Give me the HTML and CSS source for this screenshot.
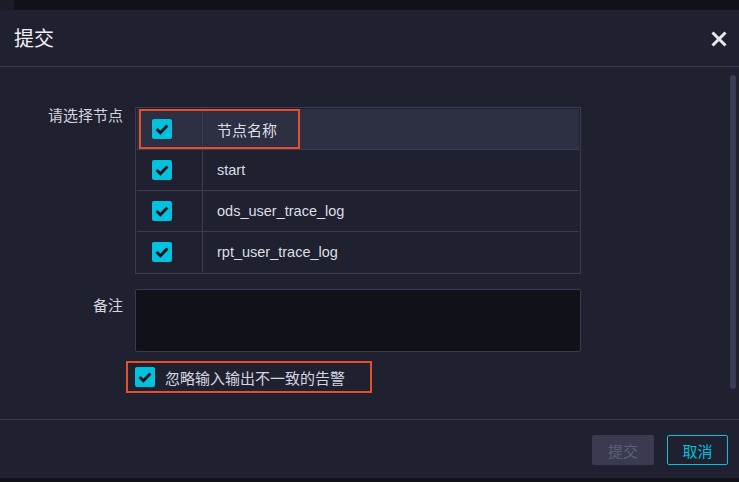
FILE: index.html
```html
<!DOCTYPE html>
<html lang="zh">
<head>
<meta charset="utf-8">
<link rel="stylesheet" href="styles.css">
</head>
<body>
<div class="topstrip"><div class="topstrip-left"></div></div>
<div class="dialog">
  <div class="header">
    <div class="title">提交</div>
    <svg class="close" width="18" height="18" viewBox="0 0 18 18"><path d="M2.5 2.5 L15.5 15.5 M15.5 2.5 L2.5 15.5" stroke="#e6e7ee" stroke-width="3" stroke-linecap="butt"/></svg>
  </div>
  <div class="body">
    <div class="content">
      <div class="row">
        <div class="label">请选择节点</div>
        <div class="table-wrap">
          <table class="tbl">
            <tr class="thead">
              <td class="c1"><span class="cb"><svg width="20" height="20" viewBox="0 0 20 20"><path d="M4.6 10 L8.4 13.8 L15.4 6.6" fill="none" stroke="#111319" stroke-width="2.9"/></svg></span></td>
              <td class="c2">节点名称</td>
            </tr>
            <tr>
              <td class="c1"><span class="cb"><svg width="20" height="20" viewBox="0 0 20 20"><path d="M4.6 10 L8.4 13.8 L15.4 6.6" fill="none" stroke="#111319" stroke-width="2.9"/></svg></span></td>
              <td class="c2">start</td>
            </tr>
            <tr>
              <td class="c1"><span class="cb"><svg width="20" height="20" viewBox="0 0 20 20"><path d="M4.6 10 L8.4 13.8 L15.4 6.6" fill="none" stroke="#111319" stroke-width="2.9"/></svg></span></td>
              <td class="c2">ods_user_trace_log</td>
            </tr>
            <tr>
              <td class="c1"><span class="cb"><svg width="20" height="20" viewBox="0 0 20 20"><path d="M4.6 10 L8.4 13.8 L15.4 6.6" fill="none" stroke="#111319" stroke-width="2.9"/></svg></span></td>
              <td class="c2">rpt_user_trace_log</td>
            </tr>
          </table>
          <div class="hl hl-head"></div>
        </div>
      </div>
      <div class="row row-note">
        <div class="label">备注</div>
        <div class="textarea"></div>
      </div>
      <div class="row row-ignore">
        <div class="label"></div>
        <div class="ignore">
          <span class="cb"><svg width="20" height="20" viewBox="0 0 20 20"><path d="M4.6 10 L8.4 13.8 L15.4 6.6" fill="none" stroke="#111319" stroke-width="2.9"/></svg></span>
          <span class="ignore-text">忽略输入输出不一致的告警</span>
          <div class="hl hl-ignore"></div>
        </div>
      </div>
    </div>
    <div class="scrollbar"></div>
  </div>
  <div class="footer">
    <button class="btn btn-disabled">提交</button>
    <button class="btn btn-cancel">取消</button>
  </div>
</div>
<div class="bottomstrip"></div>
</body>
</html>
```

FILE: styles.css
```css
* { box-sizing: border-box; }
html, body { margin: 0; padding: 0; }
body {
  width: 739px;
  height: 482px;
  overflow: hidden;
  background: #10121a;
  font-family: "Liberation Sans", "Noto Sans CJK SC", sans-serif;
  color: #d3d5de;
}
.topstrip { height: 10px; background: #10121a; }
.topstrip-left { width: 14px; height: 10px; background: #1a1c27; }
.dialog { background: #1f2130; height: 468px; display: flex; flex-direction: column; }
.header {
  height: 57px;
  border-bottom: 1px solid #383a4e;
  display: flex;
  align-items: center;
  justify-content: space-between;
  padding: 0 11px 0 14px;
}
.title { font-size: 20px; color: #f0f1f5; font-family: "Noto Sans CJK SC", sans-serif; line-height: 24px; }
.close { display: block; margin-top: 1px; }
.body { height: 352px; display: flex; position: relative; }
.content { flex: 1; padding-top: 40px; }
.scrollbar {
  position: absolute;
  right: 3px;
  top: 8px;
  width: 6px;
  height: 314px;
  border-radius: 3px;
  background: #3a3c55;
}
.row { display: flex; }
.label {
  width: 135px;
  padding-right: 12px;
  text-align: right;
  font-size: 15px;
  font-family: "Noto Sans CJK SC", sans-serif;
  color: #d3d5de;
  line-height: 18px;
}
.row:first-child .label { margin-top: -1px; }
.table-wrap {
  position: relative;
  width: 446px;
  border: 1px solid #3a3c52;
  padding: 1px;
}
.tbl { width: 100%; border-collapse: separate; border-spacing: 0; }
.tbl td { border-bottom: 1px solid #3a3c52; height: 41px; padding: 0; font-size: 14.5px; }
.tbl tr:last-child td { border-bottom: none; height: 40px; }
.thead td { background: #2d2f42; }
.c1 { width: 66px; padding-left: 15px !important; border-right: 1px solid #3a3c52; }
.c2 { padding-left: 14px !important; color: #dcdee6; }
.thead .c2 { font-family: "Noto Sans CJK SC", sans-serif; font-size: 15px; }
.cb {
  display: block;
  width: 20px;
  height: 20px;
  border-radius: 2px;
  background: #00c1de;
}
.cb svg { display: block; }
.hl { position: absolute; border: 2px solid #e5502b; pointer-events: none; }
.hl-head { left: 3px; top: 1px; width: 161px; height: 40px; }
.row-note { margin-top: 15px; }
.row-note .label { padding-top: 7px; }
.textarea {
  width: 446px;
  height: 63px;
  background: #10121a;
  border: 1px solid #383a4e;
  border-radius: 2px;
}
.row-ignore { margin-top: 15px; }
.ignore { position: relative; display: flex; align-items: center; height: 20px; }
.ignore-text { margin-left: 10px; font-size: 15px; font-family: "Noto Sans CJK SC", sans-serif; color: #d5d7e0; }
.hl-ignore { left: -9px; top: -6px; width: 246px; height: 32px; }
.footer {
  flex: 1;
  border-top: 1px solid #383a4e;
  display: flex;
  justify-content: flex-end;
  align-items: flex-start;
  padding: 15px 11px 0 0;
  gap: 13px;
}
.btn {
  height: 30px;
  font-size: 15px;
  font-family: "Noto Sans CJK SC", sans-serif;
  border-radius: 2px;
  padding: 0;
}
.btn-disabled { width: 62px; background: #3a3b50; border: none; color: #5f6075; }
.btn-cancel { width: 61px; background: transparent; border: 1px solid #00c1de; color: #00c1de; }
.bottomstrip { height: 4px; background: #10121a; }
```
